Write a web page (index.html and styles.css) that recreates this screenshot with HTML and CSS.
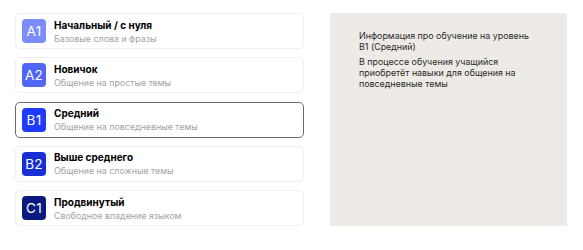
FILE: index.html
```html
<!DOCTYPE html>
<html lang="ru">
<head>
  <meta charset="UTF-8" />
  <meta name="viewport" content="width=device-width, initial-scale=1.0"/>
  <title>Уровни</title>
  <link rel="stylesheet" href="styles.css">
</head>
<body>
  <main class="levels">
    <ul class="level-list">
      <li class="level">
        <span class="badge a1">A1</span>
        <div class="level-text">
          <strong>Начальный / с нуля</strong>
          <span>Базовые слова и фразы</span>
        </div>
      </li>
      <li class="level">
        <span class="badge a2">A2</span>
        <div class="level-text">
          <strong>Новичок</strong>
          <span>Общение на простые темы</span>
        </div>
      </li>
      <li class="level active">
        <span class="badge b1">B1</span>
        <div class="level-text">
          <strong>Средний</strong>
          <span>Общение на повседневные темы</span>
        </div>
      </li>
      <li class="level">
        <span class="badge b2">B2</span>
        <div class="level-text">
          <strong>Выше среднего</strong>
          <span>Общение на сложные темы</span>
        </div>
      </li>
      <li class="level">
        <span class="badge c1">C1</span>
        <div class="level-text">
          <strong>Продвинутый</strong>
          <span>Свободное владение языком</span>
        </div>
      </li>
    </ul>

    <aside class="info">
      <p>Информация про обучение на уровень B1 (Средний)</p>
      <p>В процессе обучения учащийся приобретёт навыки для общения на повседневные темы</p>
    </aside>
  </main>
</body>
</html>
```

FILE: styles.css
```css
body {
  margin: 0;
  padding: 13px 16px 24px 15px;
  font-family: Inter, "Noto Sans", sans-serif;
  background: #fff;
  color: #111;
}

.levels {
  display: flex;
  gap: 26px;
}

.level-list {
  list-style: none;
  margin: 0;
  padding: 0;
  width: 289px;
  display: flex;
  flex-direction: column;
  gap: 8.25px;
}

.level {
  box-sizing: border-box;
  height: 36px;
  display: flex;
  align-items: center;
  gap: 8px;
  padding: 0 6px;
  border: 1px solid #efefef;
  border-radius: 5px;
}

.level.active {
  border-color: #6a6a6a;
}

.badge {
  width: 24px;
  height: 24px;
  border-radius: 4px;
  display: flex;
  align-items: center;
  justify-content: center;
  color: #fff;
  font-size: 13.5px;
  letter-spacing: 0.3px;
}

.a1 { background: #7b8cfd; }
.a2 { background: #4f66f7; }
.b1 { background: #1f3bff; }
.b2 { background: #1730d2; }
.c1 { background: #0b1a80; }

.level-text {
  display: flex;
  flex-direction: column;
  gap: 2px;
}

.level-text strong {
  font-size: 10px;
  font-weight: 700;
  color: #000;
}

.level-text span {
  font-size: 8.85px;
  color: #a3a3a3;
}

.info {
  box-sizing: border-box;
  width: 237px;
  height: 213px;
  background: #eeeae6;
  padding: 17px 28px 0 29px;
  font-size: 8.9px;
  line-height: 11px;
  color: #2a2a2a;
}

.info p {
  margin: 0 0 4px;
}
```
